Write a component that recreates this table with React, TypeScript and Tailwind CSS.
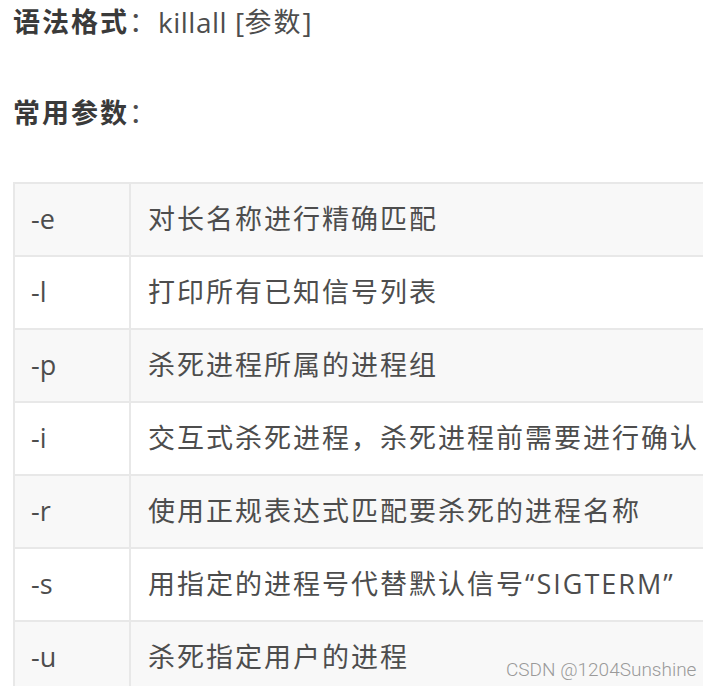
import React from "react";

const rows: [string, string][] = [
  ["-e", "对长名称进行精确匹配"],
  ["-l", "打印所有已知信号列表"],
  ["-p", "杀死进程所属的进程组"],
  ["-i", "交互式杀死进程，杀死进程前需要进行确认"],
  ["-r", "使用正规表达式匹配要杀死的进程名称"],
  ["-s", "用指定的进程号代替默认信号“SIGTERM”"],
  ["-u", "杀死指定用户的进程"],
];

export default function App() {
  return (
    <div
      className="relative w-[712px] h-[686px] overflow-hidden bg-white text-[#4d4d4d]"
      style={{ fontFamily: '"Open Sans", "Noto Sans CJK SC", sans-serif' }}
    >
      <div className="pl-[13px]">
        <div className="h-[44px] flex items-center text-[27px]">
          <span className="font-bold text-[#3a3a3a] tracking-[2px]">语法格式</span>
          <span className="tracking-[2px]">：</span>
          <span className="text-[28px] tracking-[0.5px]">killall [</span>
          <span className="tracking-[2px]">参数</span>
          <span className="text-[28px]">]</span>
        </div>
        <div className="mt-[47px] h-[44px] flex items-center text-[27px] tracking-[2px]">
          <span className="font-bold text-[#3a3a3a]">常用参数</span>
          <span>：</span>
        </div>
        <div className="mt-[47px] w-[690px] border-t-2 border-l-2 border-[#e8e8e8]">
          {rows.map(([k, v], i) => (
            <div
              key={k}
              className={`flex h-[73px] border-b-2 border-[#e8e8e8] ${
                i % 2 === 0 ? "bg-[#f8f8f8]" : "bg-white"
              }`}
            >
              <div className="w-[116px] shrink-0 border-r-2 border-[#e8e8e8] flex items-center pl-[16px] text-[27px]">
                {k}
              </div>
              <div className="flex-1 flex items-center pl-[17px] text-[27px] tracking-[2px] whitespace-nowrap">
                {v}
              </div>
            </div>
          ))}
        </div>
      </div>
      <div
        className="absolute left-[506px] top-[656px] text-[19px] text-[#9a9a9a] tracking-[0px]"
        style={{ fontFamily: '"Roboto", "Liberation Sans", sans-serif', fontWeight: 300 }}
      >
        CSDN @1204Sunshine
      </div>
    </div>
  );
}
